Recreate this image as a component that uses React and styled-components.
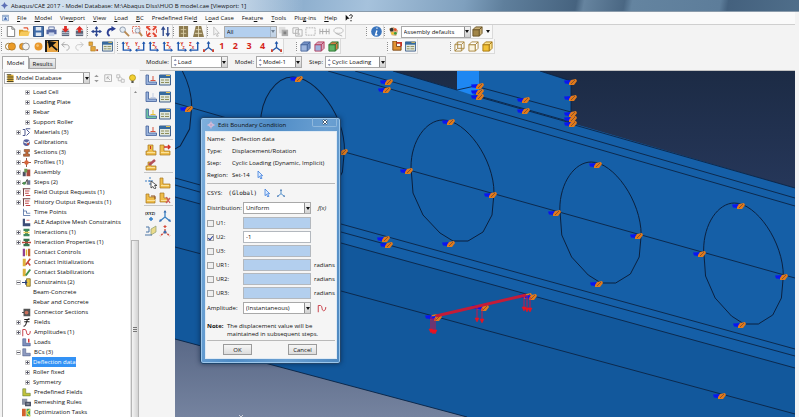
import React, { useState } from 'react';
import styled, { createGlobalStyle } from 'styled-components';

const GlobalStyle = createGlobalStyle`
  * { box-sizing: border-box; }
  body { margin: 0; }
  body, button, input, select {
    font-family: 'Open Sans', 'Noto Sans', sans-serif;
    font-size: 6px;
    line-height: 10px;
    color: #111;
  }
  button, input, select { margin: 0; padding: 0; border: 0; background: none; border-radius: 0; }
`;

const Window = styled.div`
  display: flex;
  flex-direction: column;
  height: 100vh;
  overflow: hidden;
  padding-right: 4px;
  background: #f3f3f3;
  border-right: 1px solid #fff;
`;

const TitleBar = styled.header`
  display: flex;
  align-items: center;
  gap: 3px;
  height: 12px;
  flex: none;
  padding-left: 1px;
  margin-right: -4px;
  border-bottom: 1px solid #8b9cac;
  white-space: nowrap;
  background:
    linear-gradient(90deg, rgba(226, 236, 246, 0.8), rgba(214, 227, 240, 0.7) 30%, rgba(200, 215, 230, 0) 38%),
    linear-gradient(100deg, #9cb8d3 0, #8fb0cf 38%, #a6c2dc 46%, #7fa0be 58%, #5f7f9c 63%, #46637f 72%, #66849f 73%, #4a6783 78%, #6484a0 79%, #5d7d9a 90%, #44617e 91%, #4f6e8a 100%);
`;

const MenuBar = styled.nav`
  display: flex;
  align-items: center;
  gap: 8px;
  height: 13px;
  flex: none;
  padding-left: 2px;
  background: #fafafa;
  border-bottom: 1px solid #cfcfcf;
`;

const MenuItem = styled.button`
  white-space: nowrap;
`;

const ToolBar = styled.div`
  display: flex;
  align-items: stretch;
  height: ${(props) => props.$height || 14}px;
  flex: none;
  padding-left: 1px;
  background: #f3f3f3;
`;

const ToolGroup = styled.div`
  display: flex;
  align-items: center;
  flex: none;
  width: ${(props) => props.$width}px;
  margin-left: ${(props) => props.$before || 0}px;
  background: #f8f8f8;
  border-right: 1px solid #dadada;
  border-bottom: 1px solid #dadada;
`;

const Grip = styled.span`
  flex: none;
  width: 3px;
  height: 9px;
  border-left: 1px dotted #8d8d8d;
`;

const ToolButton = styled.button`
  display: flex;
  justify-content: center;
  align-items: center;
  flex: 1 1 0;
  min-width: 0;
  height: 12px;
  background: ${(props) => (props.$active ? '#1c1c1c' : 'none')};
  opacity: ${(props) => (props.disabled ? 0.55 : 1)};
  svg { display: block; flex: none; width: 11px; height: 11px; }
`;

const ViewNumber = styled.span`
  color: #d5261c;
  font-size: 9px;
  font-weight: 700;
`;

const ArrowIcon = styled.svg`
  flex: none;
  width: 4px;
  height: 3px;
  margin: 0 2px;
`;

const SelectBox = styled.span`
  display: inline-grid;
  flex: none;
  width: ${(props) => props.$width || '100%'};
  height: 12px;
  background: ${(props) => props.$fill || '#fff'};
  border: 1px solid #a9a9a9;
  > * { grid-area: 1 / 1; }
  select {
    appearance: none;
    width: 100%;
    height: 10px;
    padding-left: ${(props) => props.$pad || 2}px;
    outline: none;
  }
`;

const SelectArrow = styled.span`
  justify-self: end;
  display: flex;
  align-items: center;
  justify-content: center;
  width: 6px;
  pointer-events: none;
  background: linear-gradient(#f5f5f5, #d2d2d2);
  border-left: 1px solid #8f8f8f;
  opacity: ${(props) => (props.$dim ? 0.4 : 1)};
`;

const SelectMark = styled.span`
  display: flex;
  align-items: center;
  justify-self: start;
  padding-left: 1px;
  pointer-events: none;
  svg { width: 9px; height: 9px; }
`;

const Main = styled.div`
  display: flex;
  flex: 1;
  min-height: 0;
`;

const SidePanel = styled.aside`
  display: flex;
  flex-direction: column;
  flex: none;
  width: 140px;
  padding: 2px 1px 0 2px;
  background: #f3f3f3;
`;

const Tabs = styled.div`
  display: flex;
  align-items: flex-end;
  height: 13px;
`;

const Tab = styled.button`
  height: ${(props) => (props.$active ? 13 : 11)}px;
  width: 27px;
  border: 1px solid #a9a9a9;
  border-bottom: ${(props) => (props.$active ? 'none' : '1px solid #a9a9a9')};
  background: ${(props) => (props.$active ? '#fbfbfb' : 'linear-gradient(#f0f0f0, #d6d6d6)')};
`;

const TreeTools = styled.div`
  display: flex;
  align-items: center;
  height: 18px;
  flex: none;
  background: #f8f8f8;
  border-left: 1px solid #c9c9c9;
  padding-left: 1px;
  svg { width: 9px; height: 9px; }
  ${ArrowIcon} { width: 4px; height: 3px; }
`;

const TreePane = styled.div`
  display: flex;
  flex: 1;
  min-height: 0;
  background: #fff;
  border-left: 1px solid #b5b5b5;
`;

const TreeList = styled.ul`
  flex: 1;
  list-style: none;
  margin: 0;
  padding: 0 0 0 13px;
  overflow: hidden;
`;

const TreeItem = styled.li`
  display: flex;
  align-items: center;
  height: 10px;
  padding-left: ${(props) => (props.$deep ? 9 : 0)}px;
  white-space: nowrap;
`;

const Expander = styled.span`
  display: flex;
  width: 5px;
  height: 5px;
  flex: none;
  margin-right: ${(props) => (props.$deep ? 2 : 1)}px;
  svg { width: 5px; height: 5px; }
`;

const TreeIcon = styled.span`
  display: flex;
  flex: none;
  width: 9px;
  margin-right: 2px;
  svg { width: 9px; height: 9px; }
`;

const TreeLabel = styled.span`
  padding: 0 1px;
  color: ${(props) => (props.$selected ? '#fff' : '#111')};
  background: ${(props) => (props.$selected ? '#3392f5' : 'none')};
`;

const ScrollTrack = styled.div`
  display: flex;
  flex-direction: column;
  align-items: center;
  flex: none;
  width: 9px;
  background: #f4f4f4;
  border-left: 1px solid #e4e4e4;
  > svg { width: 3px; height: 10px; flex: none; }
`;

const ScrollThumb = styled.div`
  display: flex;
  align-items: center;
  justify-content: center;
  width: 8px;
  margin-top: 143px;
  padding-bottom: 0;
  flex: 1;
  border: 1px solid #b5b5b5;
  border-bottom: none;
  background: linear-gradient(90deg, #f4f4f4, #d3d3d3);
  svg { width: 4px; height: 5px; }
`;

const Workspace = styled.div`
  display: flex;
  flex-direction: column;
  flex: 1;
  min-width: 0;
`;

const ContextBar = styled.div`
  display: flex;
  align-items: center;
  height: 17px;
  flex: none;
  padding-left: 6px;
  gap: 2px;
  background: #f3f3f3;
  border-bottom: 1px solid #c3c3c3;
  ${SelectBox} + label { margin-left: 5px; }
`;

const WorkArea = styled.div`
  display: flex;
  flex: 1;
  min-height: 0;
`;

const ToolBox = styled.div`
  flex: none;
  width: 35px;
  padding: 0 2px 0 4px;
  background: #f4f4f4;
`;

const ToolSet = styled.div`
  display: grid;
  grid-template-columns: 14px 14px;
  grid-auto-rows: ${(props) => props.$row || 15}px;
  padding-top: 2px;
  border-bottom: 1px solid #c6c6c6;
  &:first-child { padding-top: 0; }
  &:last-child { border-bottom: none; }
  ${ToolButton} { height: auto; }
  svg { width: 12px; height: 12px; }
`;

const Viewport = styled.main`
  position: relative;
  flex: 1;
  min-width: 0;
  overflow: hidden;
  > svg { display: block; width: 100%; height: 100%; }
`;

const Dialog = styled.form`
  position: absolute;
  left: 25px;
  top: 46px;
  width: 141px;
  padding: 0 3px 4px 4px;
  border: 1px solid #20456b;
  border-radius: 3px;
  background: linear-gradient(100deg, #7fb0dd, #4f8cc6 40%, #6ba0d2 70%, #4d88c0);
  box-shadow: inset 0 0 0 1px #9cc6ea, 0 0 5px rgba(5, 25, 55, 0.6);
`;

const DialogTitle = styled.div`
  display: flex;
  align-items: center;
  gap: 3px;
  height: 13px;
  padding-left: 2px;
  svg { width: 8px; height: 8px; }
`;

const CloseButton = styled.button`
  display: flex;
  align-items: center;
  justify-content: center;
  align-self: flex-start;
  width: 25px;
  height: 9px;
  margin-left: auto;
  border: 1px solid #8fb8dd;
  border-top: none;
  border-radius: 0 0 2px 2px;
  svg { width: 6px; height: 6px; }
`;

const DialogBody = styled.div`
  padding: 1px 1px 3px;
  background: #f5f5f5;
  border: 1px solid #dfeaf4;
`;

const InfoRow = styled.div`
  display: grid;
  grid-template-columns: 25px auto 1fr;
  align-items: center;
  height: 12px;
  svg { width: 8px; height: 8px; margin-left: 6px; }
`;

const Rule = styled.hr`
  height: 1px;
  margin: 2px 0;
  border: 0;
  background: #b9b9b9;
`;

const CsysRow = styled.div`
  display: flex;
  align-items: center;
  gap: 6px;
  height: 14px;
  svg { width: 8px; height: 8px; }
`;

const Mono = styled.span`
  font-family: 'DejaVu Sans Mono', 'Liberation Mono', monospace;
`;

const FieldRow = styled.div`
  display: grid;
  grid-template-columns: 36px 68px 1fr;
  align-items: center;
  height: ${(props) => (props.$tall ? 16 : 14)}px;
`;

const FieldNote = styled.span`
  padding-left: 3px;
  font-style: ${(props) => (props.$italic ? 'italic' : 'normal')};
  text-indent: ${(props) => (props.$italic ? 4 : 0)}px;
  svg { display: block; width: 10px; height: 9px; margin-left: 3px; }
`;

const CheckLabel = styled.label`
  display: flex;
  align-items: center;
  gap: 2px;
`;

const CheckBox = styled.input`
  appearance: none;
  display: flex;
  align-items: center;
  justify-content: center;
  width: 7px;
  height: 7px;
  border: 1px solid #a2a2a2;
  background: #f0f0f0;
  &:checked::after {
    content: '';
    width: 2px;
    height: 4px;
    border: solid #2a3f9a;
    border-width: 0 1px 1px 0;
    transform: rotate(40deg);
  }
`;

const ValueInput = styled.input`
  width: 100%;
  height: 12px;
  padding: 0 2px;
  border: 1px solid #b3b8be;
  background: #fff;
  &:disabled { background: #b3cfee; }
`;

const NoteText = styled.p`
  display: grid;
  grid-template-columns: 20px 1fr;
  margin: 6px 0 0;
  line-height: 8px;
`;

const DialogButtons = styled.div`
  display: flex;
  justify-content: space-between;
  padding: 1px 18px 0 16px;
`;

const PushButton = styled.button`
  width: 29px;
  height: 11px;
  border: 1px solid #9b9b9b;
  background: linear-gradient(#f6f6f6, #dcdcdc);
`;

function Glyph({ children }) {
  return <svg viewBox="0 0 12 12" fill="none" aria-hidden="true">{children}</svg>;
}

const cube = (stroke, front, side) => (
  <Glyph>
    <path d="M1 4h7v7H1z" fill={front} stroke={stroke} />
    <path d="M1 4l3-3h7L8 4zM8 4l3-3v7l-3 3z" fill={side} stroke={stroke} />
  </Glyph>
);

const lBar = (color, mark) => (
  <Glyph>
    <path d="M1 1v9.500h10.500V8H3.500V1z" fill={color} stroke="#41619b" strokeWidth=".8" />
    <path d="M8 2v5M5.500 6.500h5" stroke={mark} />
  </Glyph>
);

const axes = (a, b, flip) => (
  <Glyph>
    <g transform={flip ? 'translate(12 0) scale(-1 1)' : undefined}>
      <path d="M2.500 1v9H11" stroke="#1e57ae" strokeWidth="1.500" />
      <path d="M.5 3l2-2.500 2 2.500zM9.500 8l2.500 2-2.500 2z" fill="#1e57ae" />
    </g>
    <text x={flip ? 0 : 5} y="5" fontSize="5" fontWeight="700" fill="#d43224">{a}</text>
    <text x={flip ? 3 : 7} y="9" fontSize="4" fontWeight="700" fill="#d43224">{b}</text>
  </Glyph>
);

const yellowPart = (mark, d = 'M3 1h5v6h3v4H1V7h2z') => (
  <Glyph>
    <path d={d} fill="#efbd4a" stroke="#a3741d" strokeWidth=".7" />
    <path d="M2 8.500h8" stroke="#fbe29a" />
    {mark}
  </Glyph>
);

const icons = {
  logo: <Glyph><path d="M6 0l1.500 3.500L12 6 7.500 8.500 6 12 4.500 8.500 0 6l4.500-2.500z" fill="#e2d3ea" /><path d="M6 1v10M1 6h10" stroke="#a98bb5" /></Glyph>,
  app: <Glyph><path d="M1 1h10v10H1z" fill="#dce8f6" stroke="#5b7ba5" /><path d="M2 3h8" stroke="#3b65a3" /><path d="M6 4l3 5H3z" fill="#3c66b4" /></Glyph>,
  fresh: <Glyph><path d="M2.500.5h5l3 3v8h-8z" fill="#fff" stroke="#777" /><path d="M7.500.5v3h3" stroke="#777" /></Glyph>,
  open: <Glyph><path d="M0 4h4l1 1h5v6H0z" fill="#d99a22" /><path d="M2 6h10l-2 5H0z" fill="#f6c95c" /><path d="M5 2h4l1 2" stroke="#e2532f" strokeWidth="1.300" /></Glyph>,
  save: <Glyph><path d="M.5.5h11v11H.5z" fill="#3f6ba8" stroke="#274a7d" /><path d="M3 1h6v4H3zM3 7h6v4H3z" fill="#dfe8f2" /></Glyph>,
  print: <Glyph><path d="M3 1h6v3H3z" fill="#e8eef7" stroke="#6475a3" /><path d="M.5 4h11v5H.5z" fill="#5567a2" /><path d="M3 7h6v4H3z" fill="#c8d3ea" /></Glyph>,
  dbIn: <Glyph><path d="M2 5h8v6H2z" fill="#5b6577" /><path d="M2 7h8M2 9h8" stroke="#c6d0df" /><path d="M4.500 0h3v3H10L6 7 2 3h2.500z" fill="#dd2a24" /></Glyph>,
  dbOut: <Glyph><path d="M2 5h8v6H2z" fill="#5b6577" /><path d="M2 9h8" stroke="#c6d0df" /><path d="M4.500 7h3V4H10L6 0 2 4h2.500z" fill="#dd2a24" /></Glyph>,
  pan: <Glyph><path d="M6 1v10M1 6h10" stroke="#2b4590" strokeWidth="1.500" /><path d="M6 0l2 3H4zM6 12l2-3H4zM0 6l3-2v4zM12 6L9 4v4z" fill="#2b4590" /></Glyph>,
  rotate: <Glyph><path d="M5 11C1 8 3 3 8 3" stroke="#2c3f93" strokeWidth="2" /><path d="M7 0l5 3-5 3z" fill="#2c3f93" /></Glyph>,
  zoom: <Glyph><circle cx="4" cy="4" r="3" fill="#e4ebf2" stroke="#8a98aa" /><path d="M6 6l5 5" stroke="#b88a54" strokeWidth="2" /></Glyph>,
  zoomBox: <Glyph><path d="M.5.5h8v7h-8z" stroke="#d8614e" strokeDasharray="2 1" /><circle cx="6" cy="5" r="2.500" fill="#e8eef5" stroke="#98a3b2" /><path d="M8 7l3 4" stroke="#b88a54" strokeWidth="2" /></Glyph>,
  fit: <Glyph><path d="M.5.5h11v11H.5z" fill="#fbe9e5" stroke="#df4a36" strokeDasharray="4 3" /><path d="M1 1l3.500 3.500M11 1L7.500 4.500M1 11l3.500-3.500M11 11L7.500 7.500" stroke="#df3f2c" strokeWidth="2" /></Glyph>,
  cycle: <Glyph><path d="M3.500 11V2M8.500 1v9" stroke="#2f4a8e" strokeWidth="1.500" /><path d="M3.500 0L6 4H1zM8.500 12L11 8H6z" fill="#2f4a8e" /></Glyph>,
  parallel: <Glyph><path d="M1 0h10v12H1z" fill="#8d7b4f" /><path d="M3 4h6M3 8h6M6 0v12" stroke="#d8cba2" /></Glyph>,
  perspective: <Glyph><path d="M3 0h6l3 12H0z" fill="#8d7b4f" /><path d="M3 4h6M2 8h8M6 0v12" stroke="#e5dab6" /></Glyph>,
  cursor: <Glyph><path d="M3 1v9l2-2 1.500 3.500L8 11 6.500 8H9z" fill="#eee" stroke="#999" /></Glyph>,
  pick: <Glyph><path d="M3 0v10l2.500-2L7 12l2-1-2-4h3z" fill="#dcebff" stroke="#1f69d6" /></Glyph>,
  layer: <Glyph><path d="M1 1h7v7H1z" fill="#ccc" /><path d="M4 4h7v7H4z" fill="#777" /><path d="M6 6h3v3H6z" fill="#222" /></Glyph>,
  selCube: <Glyph><path d="M1 2h6v6H1zM4 4h7v7H4z" stroke="#777" /><path d="M6 5v6l3-2z" fill="#999" /></Glyph>,
  selBox: <Glyph><path d="M1 2h10v8H1z" stroke="#777" strokeDasharray="2 1" /></Glyph>,
  selRow: <Glyph><path d="M1 3v6M11 3v6M1 6h10M4 3v6M8 3v6" stroke="#666" /></Glyph>,
  lasso: <Glyph><ellipse cx="6" cy="5" rx="5" ry="3" stroke="#888" /><path d="M3 8l7 3" stroke="#777" /></Glyph>,
  info: <Glyph><circle cx="6" cy="6" r="5.800" fill="#3974bd" /><path d="M7 2.500H6M6.500 5L5 9.500h2" stroke="#fff" strokeWidth="1.500" /></Glyph>,
  palette: <Glyph><path d="M1 3l5-2 5 4-2 6-5-1z" fill="#d5b084" /><circle cx="4" cy="4" r="2" fill="#333" /><circle cx="8" cy="4" r="1.500" fill="#e44a2a" /><circle cx="8" cy="8" r="1.500" fill="#3a9c3c" /><circle cx="5" cy="8" r="1.500" fill="#efc32f" /></Glyph>,
  brownCube: cube('#6a5426', '#a18547', '#c9b077'),
  overlap1: <Glyph><circle cx="4" cy="6" r="3.500" stroke="#8f6b25" fill="#fff" /><circle cx="7.500" cy="6" r="4" fill="#eb9b27" stroke="#94631c" strokeWidth=".6" /></Glyph>,
  overlap2: <Glyph><circle cx="4" cy="6" r="3.500" fill="#eb9b27" stroke="#94631c" strokeWidth=".6" /><circle cx="7.500" cy="6" r="3.800" fill="#f5f5f5" stroke="#8d8d8d" /></Glyph>,
  ball: <Glyph><circle cx="6" cy="6" r="4.300" fill="#e9972b" /><circle cx="5" cy="5" r="1.500" fill="#f5c273" /></Glyph>,
  probe: <Glyph><path d="M0 0h12v12H0z" fill="#e9a646" /><path d="M1 1l10 9M2 1l6 1-5 4z" stroke="#111" strokeWidth="2" fill="#111" /></Glyph>,
  undo: <Glyph><path d="M2 4h5c4 0 4 6 0 6M5 1L2 4l3 3" stroke="#a2a2a2" /></Glyph>,
  redo: <Glyph><path d="M10 4H5c-4 0-4 6 0 6M7 1l3 3-3 3" stroke="#c5c5c5" /></Glyph>,
  parts: <Glyph><path d="M1 1h4v4H1zM3 6h5v5H3z" fill="#e5a63b" stroke="#a46f1c" strokeWidth=".6" /><path d="M9 9h2v2H9z" fill="#b7502a" /></Glyph>,
  table: <Glyph><path d="M.5 1h11v10H.5z" fill="#dfe6dd" stroke="#41618d" /><path d="M0 1h12v3H0z" fill="#376a9e" /><path d="M2 6h3M6 6h4M2 8.500h3M6 8.500h4" stroke="#8f8f5a" /><path d="M7 1.500h4" stroke="#e4c452" /></Glyph>,
  triad: <Glyph><path d="M6 1v6l-5 4M6 7l5 4" stroke="#2156a8" strokeWidth="1.400" /><path d="M6 0l2 3H4z" fill="#2156a8" /><path d="M0 9h2v3H0zM10 9h2v3h-2z" fill="#d2432f" /></Glyph>,
  triadBlue: <Glyph><path d="M6 1v6l-5 4M6 7l5 4" stroke="#3b82c4" strokeWidth="1.300" /><path d="M6 0l1.500 2.500h-3zM0 12l1-3 2 2zM12 12l-1-3-2 2z" fill="#3b6fb0" /></Glyph>,
  triadRed: <Glyph><path d="M6 1v6l-5 4M6 7l5 4" stroke="#d64a3a" strokeWidth="1.300" strokeDasharray="2 1" /><circle cx="6" cy="7" r="1.500" fill="#3b6fb0" /><path d="M6 0l2 2H4z" fill="#d64a3a" /></Glyph>,
  cubeBlue: cube('#4a689e', '#9fb6dd', '#7390c4'),
  cubeRed: cube('#b3405e', '#9fb4de', '#d8a6bd'),
  cubeGreen: cube('#2c7a35', '#62b466', '#d47a42'),
  cubeWire: (
    <Glyph>
      <path d="M1 4h7v7H1zM4 1h7v7H4zM1 4l3-3M8 4l3-3M8 11l3-3M1 11l3-3" stroke="#a8873d" />
    </Glyph>
  ),
  cubeHidden: cube('#a8873d', '#fbf4df', '#fff'),
  cubeSolid: cube('#a57712', '#f2c136', '#fbe18a'),
  partL: <Glyph><path d="M2 0h4v6h5v4H2z" fill="#e29331" stroke="#7c4817" /><path d="M6 2h5v4" stroke="#c43322" strokeWidth="2" /></Glyph>,
  load: lBar('#9bb4dc', '#d4533f'),
  bc: lBar('#9bb4dc', '#c3cee2'),
  field: lBar('#6fc5a4', '#e4c13a'),
  partUp: yellowPart(<path d="M5.500 2v3" stroke="#c53a2a" />),
  partArrow: yellowPart(<path d="M5 3h6M9 1l2 2-2 2" stroke="#cf3328" strokeWidth="1.400" />, 'M1 1h4v6h6v4H1z'),
  partEdit: yellowPart(<path d="M4 6l6-5" stroke="#b3505a" strokeWidth="2.500" />, 'M1 7h2V3h3v4h5v4H1z'),
  partFlat: yellowPart(null, 'M1 1h3v6h7v4H1z'),
  partBlock: yellowPart(<path d="M6 4h4v3" stroke="#8a4c1a" />, 'M1 2h3v3h6v6H1z'),
  partCut: yellowPart(<path d="M7 5l4 6M11 6l-4 5" stroke="#cf5b5b" strokeWidth="1.300" />, 'M1 1h4v5h4v4H1z'),
  point: <Glyph><path d="M0 4h9M5 0v8" stroke="#3d7fc4" strokeDasharray="2 1" /><path d="M6 4v7l2-1.500L9.500 12 11 11 9.500 8.500H12z" fill="#fff" stroke="#333" strokeWidth=".8" /></Glyph>,
  xyz: <Glyph><text x="0" y="5" fontSize="4" fontWeight="700" fill="#222">(XYZ)</text><path d="M6 7v4M4 9h4" stroke="#2f7dc9" strokeWidth="1.400" /></Glyph>,
  plane: <Glyph><path d="M6 4l5-3v6L6 10z" fill="#eadb8a" stroke="#8e9b74" strokeWidth=".7" /><path d="M1 2h3v5H1M0 10h7" stroke="#4c76a6" /></Glyph>,
  database: <Glyph><path d="M2 1h8v10H2z" fill="#dcae36" /><path d="M1 1h6M1 4h9M1 7h9M1 10h9" stroke="#4d4525" strokeWidth="1.500" /></Glyph>,
  stepper: <Glyph><path d="M1 4l2-3 2 3zM1 8l2 3 2-3z" fill="#8b93b5" /></Glyph>,
  updown: <Glyph><path d="M3 4l3-3 3 3zM3 8l3 3 3-3z" fill="#999" /></Glyph>,
  copy: <Glyph><path d="M1 1h9v9H1zM4 4l4 4M4 7V4h3" stroke="#a4a4a4" /></Glyph>,
  copies: <Glyph><path d="M1 1h4v4H1zM7 7h4v4H7zM3 5v4h4M5 3l4 4" stroke="#b0b0b0" /></Glyph>,
  bulb: <Glyph><circle cx="6" cy="5" r="4" fill="#f2cf31" stroke="#aa9017" /><path d="M4.500 9h3v3h-3z" fill="#57584d" /></Glyph>,
  materials: <Glyph><path d="M1 2h3v8H1M6 2l4 4-4 4M5 1h6" stroke="#4b568e" strokeWidth="1.300" /></Glyph>,
  calib: <Glyph><circle cx="6" cy="6" r="4.500" fill="#56609f" /><path d="M2 5l5 2 3-3" stroke="#f0f0f0" strokeWidth="1.500" /><circle cx="8" cy="8" r="1.500" fill="#c34532" /></Glyph>,
  sections: <Glyph><path d="M2 11h8V8H8V5h2V2H3v3h2v3H2z" fill="#c26a3a" stroke="#6a4229" strokeWidth=".7" /></Glyph>,
  profiles: <Glyph><path d="M6 0v12M0 6h12" stroke="#8d4432" strokeWidth="1.200" /><circle cx="6" cy="6" r="3" fill="#d7653b" /></Glyph>,
  assembly: <Glyph><path d="M1 5h4v6H1z" fill="#4d4f60" /><path d="M6 2h5v9H6z" fill="#a9483b" /><path d="M3 1h4v5H3z" fill="#6d9a52" /></Glyph>,
  steps: <Glyph><path d="M0 7h4l3-5v7" stroke="#333" strokeWidth="1.200" /><circle cx="3" cy="7" r="2" fill="#4c9251" /><path d="M8 3h3v6H8z" fill="#6c7391" /></Glyph>,
  output: <Glyph><path d="M1 1h10M2 1v10" stroke="#6b3b3b" strokeWidth="1.300" /><path d="M4 4h6M4 7h5M5 10h6" stroke="#c34545" strokeWidth="1.500" /></Glyph>,
  time: <Glyph><path d="M2 1v9h9M2 4h4v3h5" stroke="#41619b" /></Glyph>,
  ale: <Glyph><path d="M1 1h3v6h7v4H1z" fill="#3d4d77" /><path d="M6 3h4" stroke="#c44" /></Glyph>,
  inter: <Glyph><path d="M2 1h8v3H8v4h2v3H2V8h2V4H2z" fill="#3f8a5c" /><path d="M2 6h8" stroke="#e6cf5a" strokeWidth="2" /></Glyph>,
  interProp: <Glyph><path d="M2 1h8v3H8v4h2v3H2V8h2V4H2z" fill="#37734c" /><path d="M0 6h12" stroke="#b74638" strokeWidth="2" /></Glyph>,
  controls: <Glyph><path d="M1 1h3v10H1z" fill="#8f3e95" /><path d="M5 2h2v8H5z" fill="#e2b431" /><path d="M8 1h3v10H8z" fill="#c2612e" /></Glyph>,
  init: <Glyph><path d="M1 1h4v10H1z" fill="#ddb13c" /><path d="M5 9l6-8M7 5l4 5" stroke="#c33f33" strokeWidth="2" /></Glyph>,
  stab: <Glyph><path d="M1 1h4v10H1z" fill="#ddb13c" /><path d="M5 10l6-8" stroke="#3f8f49" strokeWidth="2.500" /></Glyph>,
  constraint: <Glyph><path d="M6 1h5v10H6z" fill="#e5c443" stroke="#796422" /><path d="M0 6h7M5 3v6" stroke="#29417c" strokeWidth="1.600" /></Glyph>,
  connector: <Glyph><path d="M2 1h9v10H2z" fill="#555" /><circle cx="6" cy="6" r="2.500" fill="#c9705c" /><path d="M0 6h3" stroke="#222" /></Glyph>,
  fields: <Glyph><path d="M10 1C4 0 8 11 2 11M3 5h7M3 2h7" stroke="#222" strokeWidth="1.400" /></Glyph>,
  amp: <Glyph><path d="M1 11V2h3c3 0 1 7 4 7s3-4 3-5" stroke="#c8414a" strokeWidth="1.300" /></Glyph>,
  loads: <Glyph><path d="M1 1v9.500h10V7H5V1z" fill="#8090bd" stroke="#374c80" strokeWidth=".7" /><path d="M9 1v5" stroke="#d33" strokeWidth="2" /></Glyph>,
  bcs: <Glyph><path d="M1 1v9.500h10V7H5V1z" fill="#8e9bc0" stroke="#465685" strokeWidth=".7" /></Glyph>,
  predefined: <Glyph><path d="M1 1v9.500h10V7H5V1z" fill="#c3c23c" stroke="#55752f" strokeWidth=".7" /></Glyph>,
  remesh: <Glyph><path d="M0 1h7v8H0z" fill="#8b93a5" /><path d="M4 5h8v6H4z" fill="#4c5468" /><path d="M6 8h4" stroke="#ddd" /></Glyph>,
  optim: <Glyph><path d="M0 1h5v10H0z" fill="#d3622d" /><path d="M6 1h5v10H6z" fill="#4c9d55" /><path d="M6 6l5-4M6 6l5 5" stroke="#e6e04c" strokeWidth="1.500" /></Glyph>,
};

function DownArrow() {
  return <ArrowIcon viewBox="0 0 4 3" aria-hidden="true"><path d="M0 0h4L2 3z" fill="#111" /></ArrowIcon>;
}

function DropDown({ id, label, options, width, fill, icon, pad, dim }) {
  return (
    <SelectBox $width={width} $fill={fill} $pad={pad}>
      <select id={id} aria-label={label}>
        {options.map((o) => <option key={o}>{o}</option>)}
      </select>
      {icon && <SelectMark>{icons[icon]}</SelectMark>}
      <SelectArrow $dim={dim}><DownArrow /></SelectArrow>
    </SelectBox>
  );
}

function Tools({ names, disabled }) {
  return names.map((name, i) => (
    <ToolButton key={i} type="button" aria-label={name} $active={name === 'probe'} disabled={disabled}>
      {icons[name]}
    </ToolButton>
  ));
}

const menus = [
  ['', 'F', 'ile'], ['', 'M', 'odel'], ['Vie', 'w', 'port'], ['', 'V', 'iew'], ['', 'L', 'oad'],
  ['', 'B', 'C'], ['Predefined Fiel', 'd', ''], ['L', 'o', 'ad Case'], ['Feat', 'u', 're'],
  ['', 'T', 'ools'], ['Plu', 'g', '-ins'], ['', 'H', 'elp'],
];

// label, icon, sign of the expander
const tree = [
  ['Load Cell', null, '+'],
  ['Loading Plate', null, '+'],
  ['Rebar', null, '+'],
  ['Support Roller', null, '+'],
  ['Materials (3)', 'materials', '+'],
  ['Calibrations', 'calib', ''],
  ['Sections (3)', 'sections', '+'],
  ['Profiles (1)', 'profiles', '+'],
  ['Assembly', 'assembly', '+'],
  ['Steps (2)', 'steps', '+'],
  ['Field Output Requests (1)', 'output', '+'],
  ['History Output Requests (1)', 'output', '+'],
  ['Time Points', 'time', ''],
  ['ALE Adaptive Mesh Constraints', 'ale', ''],
  ['Interactions (1)', 'inter', '+'],
  ['Interaction Properties (1)', 'interProp', '+'],
  ['Contact Controls', 'controls', ''],
  ['Contact Initializations', 'init', ''],
  ['Contact Stabilizations', 'stab', ''],
  ['Constraints (2)', 'constraint', '-'],
  ['Beam-Concrete', null, ''],
  ['Rebar and Concrete', null, ''],
  ['Connector Sections', 'connector', ''],
  ['Fields', 'fields', '+'],
  ['Amplitudes (1)', 'amp', '+'],
  ['Loads', 'loads', ''],
  ['BCs (3)', 'bcs', '-'],
  ['Deflection data', null, '+'],
  ['Roller fixed', null, '+'],
  ['Symmetry', null, '+'],
  ['Predefined Fields', 'predefined', ''],
  ['Remeshing Rules', 'remesh', ''],
  ['Optimization Tasks', 'optim', ''],
];

function ModelTree() {
  const [selected, setSelected] = useState('Deflection data');
  return (
    <TreeList>
      {tree.map(([label, icon, sign]) => (
        <TreeItem key={label} $deep={!icon} onClick={() => setSelected(label)}>
          <Expander $deep={!icon}>
            {sign && (
              <svg viewBox="0 0 5 5" fill="none" aria-hidden="true">
                <path d="M.5.5h4v4h-4z" stroke="#c4c4c4" />
                <path d={sign === '+' ? 'M1 2.500h3M2.500 1v3' : 'M1 2.500h3'} stroke="#5a5a6a" />
              </svg>
            )}
          </Expander>
          {icon && <TreeIcon>{icons[icon]}</TreeIcon>}
          <TreeLabel $selected={label === selected}>{label}</TreeLabel>
        </TreeItem>
      ))}
    </TreeList>
  );
}

const markers = [
  [187, 109], [297, 79], [387, 82], [385, 90], [478, 86], [478, 92], [478, 97], [524, 100], [524, 111],
  [571, 82], [571, 98], [571, 114], [571, 119], [571, 124], [449, 122], [407, 171], [491, 195],
  [449, 244], [555, 213], [384, 239], [387, 245], [342, 152], [596, 165], [637, 236], [739, 206],
  [700, 254], [782, 277], [740, 325], [597, 284], [720, 396], [256, 129],
  [432, 317], [436, 318], [479, 307], [483, 308], [526, 296], [531, 297],
];

// centre and width in percent of every web opening
const holes = [[148, 95, 104], [302, 138, 101], [452, 181, 100], [600, 223, 98], [743, 264, 96]];

// edges of the beam, from the left side of the viewport to the right
const edges = [
  'M355 71L795 198', 'M328 71L795 206', 'M175 103L341 151L795 278', 'M175 178L341 224L795 349',
  'M175 185L341 232L795 356', 'M175 197L341 243L795 368', 'M175 247L341 291L795 414',
  'M457 90L475 86L571 112', 'M479 97L571 123', 'M479 96L571 122', 'M571 81V124',
];

const loadArrows = [
  [431, 317, 332], [433, 318, 333], [435, 318, 333], [477, 307, 321], [482, 308, 322],
  [524, 296, 310], [527, 296, 311], [530, 297, 311],
];

function Scene() {
  return (
    <svg viewBox="175 71 620 346" preserveAspectRatio="xMinYMin slice" fill="none" role="img" aria-label="Beam model">
      <defs>
        <linearGradient id="backdrop" x1="0" y1="0" x2="0" y2="1">
          <stop offset="0" stopColor="#1c2b45" />
          <stop offset=".35" stopColor="#26375a" />
          <stop offset="1" stopColor="#75839f" />
        </linearGradient>
      </defs>
      <path d="M175 71h620v346H175z" fill="url(#backdrop)" />
      <path d="M175 71H393L795 188V417H467L175 339z" fill="#155fa7" />
      <path d="M175 197L341 243L795 368V417H467L175 339z" fill="#12589c" />
      <path d="M472 71H540L571 81V125L472 95z" fill="#155fa7" />
      <path d="M457 71H479V92L472 95L457 90z" fill="#1e87f2" />
      <g stroke="#0b2444" strokeWidth=".9">
        {edges.map((d) => <path key={d} d={d} />)}
        <path d="M393 71L457 90M571 124L795 188M175 339L467 417M540 71L571 81" />
      </g>
      {holes.map(([x, y, percent]) => (
        <path
          key={x}
          transform={`translate(${x} ${y}) scale(${percent / 100} 1)`}
          d="M-41 -14C-41 -40 -26 -61 -9 -61C14 -61 42 -22 42 12L40 34L31 51L16 60H1L-12 52L-29 34L-39 12Z"
          stroke="#0b1f3c"
        />
      ))}
      {markers.map(([x, y]) => (
        <g key={`${x}-${y}`} transform={`translate(${x} ${y})`}>
          <path d="M-7 -1.500L2 -2L-1 2L-6 1.500z" fill="#0b16f0" />
          <path d="M0 -2L5 -3L6 -1L3 3L-2 3L-2 1z" fill="#e07a1c" />
          <path d="M0 2L4 -2" stroke="#7a4a2a" strokeWidth=".8" />
        </g>
      ))}
      <path d="M436 316L526 295" stroke="#c41c38" strokeWidth="3" />
      {loadArrows.map(([x, y, end]) => (
        <g key={x}>
          <path d={`M${x} ${y}V${end - 2}`} stroke="#c3174a" />
          <path d={`M${x - 2} ${end - 3}h4l-2 4z`} fill="#f0101c" stroke="#f0101c" strokeWidth=".5" />
        </g>
      ))}
      <path d="M239 415l4 4M243 415l-4 4" stroke="#e8e8e8" strokeWidth=".8" />
    </svg>
  );
}

const freedoms = [
  ['U1', ''], ['U2', ''], ['U3', ''], ['UR1', 'radians'], ['UR2', 'radians'], ['UR3', 'radians'],
];

function BoundaryDialog() {
  const [values, setValues] = useState({ U2: '-1' });

  const toggle = (name) => {
    const next = { ...values };
    if (name in next) delete next[name];
    else next[name] = '0';
    setValues(next);
  };

  return (
    <Dialog aria-label="Edit Boundary Condition" onSubmit={(e) => e.preventDefault()}>
      <DialogTitle>
        {icons.logo}
        <span>Edit Boundary Condition</span>
        <CloseButton type="button" aria-label="Close">
          <Glyph>
            <path d="M2 2l8 8M10 2l-8 8" stroke="#3a4a5c" strokeWidth="4" />
            <path d="M2 2l8 8M10 2l-8 8" stroke="#fff" strokeWidth="2" />
          </Glyph>
        </CloseButton>
      </DialogTitle>
      <DialogBody>
        <InfoRow><span>Name:</span><span>Deflection data</span></InfoRow>
        <InfoRow><span>Type:</span><span>Displacement/Rotation</span></InfoRow>
        <InfoRow><span>Step:</span><span>Cyclic Loading (Dynamic, Implicit)</span></InfoRow>
        <InfoRow><span>Region:</span><span>Set-14</span>{icons.pick}</InfoRow>
        <Rule />
        <CsysRow><span>CSYS:</span><Mono>(Global)</Mono>{icons.pick}{icons.triadBlue}</CsysRow>
        <FieldRow $tall>
          <label htmlFor="distribution">Distribution:</label>
          <DropDown id="distribution" options={['Uniform', 'User-defined']} />
          <FieldNote $italic>f(x)</FieldNote>
        </FieldRow>
        {freedoms.map(([name, unit]) => (
          <FieldRow key={name}>
            <CheckLabel>
              <CheckBox type="checkbox" checked={name in values} onChange={() => toggle(name)} />
              {name}:
            </CheckLabel>
            <ValueInput
              aria-label={`${name} value`}
              disabled={!(name in values)}
              value={values[name] || ''}
              onChange={(e) => setValues({ ...values, [name]: e.target.value })}
            />
            <FieldNote>{unit}</FieldNote>
          </FieldRow>
        ))}
        <FieldRow $tall>
          <label htmlFor="amplitude">Amplitude:</label>
          <DropDown id="amplitude" options={['(Instantaneous)', '(Ramp)']} />
          <FieldNote>{icons.amp}</FieldNote>
        </FieldRow>
        <NoteText>
          <b>Note:</b>
          <span>The displacement value will be<br />maintained in subsequent steps.</span>
        </NoteText>
        <Rule />
        <DialogButtons>
          <PushButton type="submit">OK</PushButton>
          <PushButton type="button">Cancel</PushButton>
        </DialogButtons>
      </DialogBody>
    </Dialog>
  );
}

function App() {
  return (
    <>
      <GlobalStyle />
      <Window>
        <TitleBar>
          <svg width="7" height="7" viewBox="0 0 12 12" aria-hidden="true">
            <path d="M6 0l2 4 4 2-4 2-2 4-2-4-4-2 4-2z" fill="#5c6fb5" />
          </svg>
          <span>Abaqus/CAE 2017 - Model Database: M:\Abaqus DIss\HUO B model.cae [Viewport: 1]</span>
        </TitleBar>
        <MenuBar>
          <svg width="7" height="8" viewBox="0 0 12 12" aria-hidden="true">{icons.app}</svg>
          {menus.map(([before, key, after]) => (
            <MenuItem key={before + key + after} type="button">{before}<u>{key}</u>{after}</MenuItem>
          ))}
          <svg width="8" height="8" viewBox="0 0 12 12" aria-hidden="true">
            <path d="M1 1v9l3-3h3z" fill="#111" />
            <path d="M7 3c0-3 4-2 4 0s-2 1-2 4M9 9v2" stroke="#111" strokeWidth="1.500" fill="none" />
          </svg>
        </MenuBar>
        <ToolBar>
          <ToolGroup $width={86}><Grip /><Tools names={['fresh', 'open', 'save', 'print', 'dbIn', 'dbOut']} /></ToolGroup>
          <ToolGroup $width={86}><Grip /><Tools names={['pan', 'rotate', 'zoom', 'zoomBox', 'fit', 'cycle']} /></ToolGroup>
          <ToolGroup $width={34}><Grip /><Tools names={['parallel', 'perspective']} /></ToolGroup>
          <ToolGroup $width={139}>
            <Grip />
            <Tools names={['cursor']} disabled />
            <DropDown label="Selection filter" options={['All']} width="53px" fill="#b3cfee" dim />
            <Tools names={['layer', 'selCube', 'selBox', 'selRow', 'lasso']} disabled />
          </ToolGroup>
          <ToolGroup $width={18} $before={20}><Grip /><Tools names={['info']} /></ToolGroup>
          <ToolGroup $width={109}>
            <Grip />
            <Tools names={['palette']} />
            <DropDown label="Color code" options={['Assembly defaults']} width="70px" />
            <Tools names={['brownCube']} />
            <DownArrow />
          </ToolGroup>
        </ToolBar>
        <ToolBar $height={15}>
          <ToolGroup $width={114}>
            <Grip />
            <Tools names={['overlap1', 'overlap2', 'ball', 'probe', 'undo', 'redo', 'parts', 'table']} />
          </ToolGroup>
          <ToolGroup $width={167} $before={2}>
            <Grip />
            {[['Y', 'Z'], ['Y', 'Z', true], ['Z', 'X'], ['Z', 'X'], ['Y', 'Z'], ['Z', 'X', true]].map((view, i) => (
              <ToolButton key={i} type="button" aria-label="View">{axes(...view)}</ToolButton>
            ))}
            <Tools names={['triad']} />
            {[1, 2, 3, 4].map((n) => <ToolButton key={n} type="button"><ViewNumber>{n}</ViewNumber></ToolButton>)}
            <Tools names={['triad']} />
          </ToolGroup>
          <ToolGroup $width={45} $before={12}><Grip /><Tools names={['cubeBlue', 'cubeRed', 'cubeGreen']} /></ToolGroup>
          <ToolGroup $width={31} $before={46}><Grip /><Tools names={['partL', 'table']} /></ToolGroup>
          <ToolGroup $width={45} $before={32}><Grip /><Tools names={['cubeWire', 'cubeHidden', 'cubeSolid']} /></ToolGroup>
        </ToolBar>
        <Main>
          <SidePanel>
            <Tabs role="tablist">
              <Tab type="button" role="tab" aria-selected="true" $active>Model</Tab>
              <Tab type="button" role="tab" aria-selected="false">Results</Tab>
            </Tabs>
            <TreeTools>
              <DropDown label="Tree" options={['Model Database']} width="86px" icon="database" pad={11} />
              <Tools names={['updown', 'copy', 'copies', 'bulb']} />
            </TreeTools>
            <TreePane>
              <ModelTree />
              <ScrollTrack>
                <svg viewBox="0 0 4 10" aria-hidden="true"><path d="M0 6l2-2 2 2z" fill="#666" /></svg>
                <ScrollThumb>
                  <svg viewBox="0 0 4 5" aria-hidden="true"><path d="M0 .5h4M0 2.500h4M0 4.500h4" stroke="#777" /></svg>
                </ScrollThumb>
              </ScrollTrack>
            </TreePane>
          </SidePanel>
          <Workspace>
            <ContextBar>
              <label htmlFor="module">Module:</label>
              <DropDown id="module" options={['Load']} width="57px" icon="stepper" pad={6} />
              <label htmlFor="model">Model:</label>
              <DropDown id="model" options={['Model-1']} width="46px" icon="stepper" pad={6} />
              <label htmlFor="step">Step:</label>
              <DropDown id="step" options={['Cyclic Loading']} width="61px" icon="stepper" pad={6} />
            </ContextBar>
            <WorkArea>
              <ToolBox>
                <ToolSet $row={17}><Tools names={['load', 'table', 'bc', 'table', 'field', 'table', 'load', 'table']} /></ToolSet>
                <ToolSet><Tools names={['partUp', 'partArrow', 'partEdit']} /></ToolSet>
                <ToolSet><Tools names={['point', 'partFlat', 'partBlock', 'partCut']} /></ToolSet>
                <ToolSet><Tools names={['xyz', 'triadBlue', 'plane', 'triadRed']} /></ToolSet>
              </ToolBox>
              <Viewport>
                <Scene />
                <BoundaryDialog />
              </Viewport>
            </WorkArea>
          </Workspace>
        </Main>
      </Window>
    </>
  );
}

export default App;
